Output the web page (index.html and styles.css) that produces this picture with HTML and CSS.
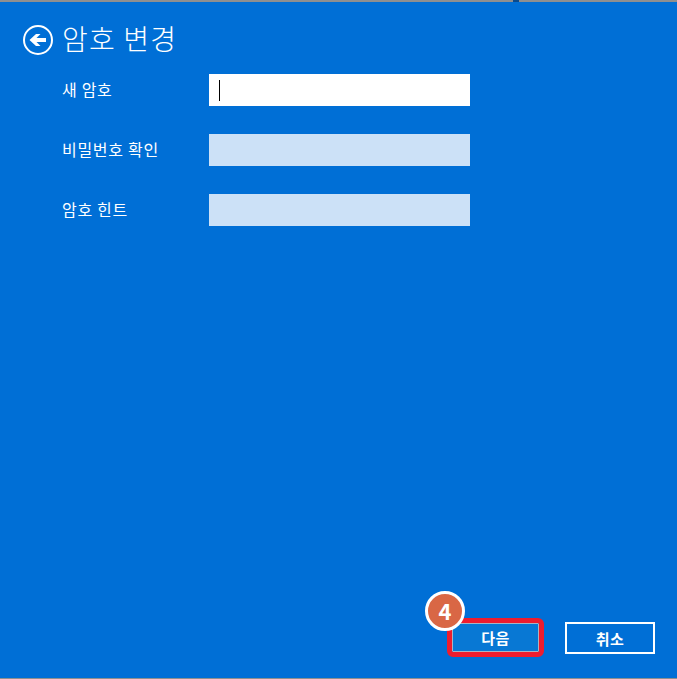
FILE: index.html
```html
<!DOCTYPE html>
<html>
  <head>
    <title>암호 변경</title>
    <link rel="stylesheet" href="styles.css">
  </head>
  <body>
    <div class="top-bar">
      <span class="top-mark"></span>
    </div>

    <div class="dialog">
      <div class="header">
        <svg class="back-icon" width="32" height="32" viewBox="0 0 32 32">
          <circle cx="16" cy="16" r="14" fill="none" stroke="#fff" stroke-width="2"/>
          <path d="M24 14H14.5L18.5 10H14L7.5 16L14 22H18.5L14.5 18H24Z" fill="#fff"/>
        </svg>
        <h1>암호 변경</h1>
      </div>

      <div class="form">
        <div class="row">
          <label>새 암호</label>
          <div class="field active"><span class="caret"></span></div>
        </div>
        <div class="row">
          <label>비밀번호 확인</label>
          <div class="field"></div>
        </div>
        <div class="row">
          <label>암호 힌트</label>
          <div class="field"></div>
        </div>
      </div>

      <div class="buttons">
        <div class="next-wrap">
          <span class="step-badge">4</span>
          <button class="next">다음</button>
        </div>
        <button class="cancel">취소</button>
      </div>
    </div>

    <div class="bottom-bar"></div>
  </body>
</html>
```

FILE: styles.css
```css
* {
  box-sizing: border-box;
}

html, body {
  height: 100%;
}

body {
  margin: 0;
  display: flex;
  flex-direction: column;
  background-color: #006fd6;
  color: #fff;
  font-family: "Noto Sans CJK KR", "Liberation Sans", sans-serif;
  overflow: hidden;
}

.top-bar {
  height: 2px;
  flex-shrink: 0;
  padding-left: 513px;
  background-color: #8f8f8f;
}

.top-mark {
  display: block;
  width: 6px;
  height: 2px;
  background-color: #0a4a8c;
}

.bottom-bar {
  height: 1px;
  flex-shrink: 0;
  background-color: #8f8f8f;
}

.dialog {
  flex: 1;
  display: flex;
  flex-direction: column;
  padding: 20px 22px 24px 22px;
}

.header {
  display: flex;
  align-items: center;
  height: 32px;
}

.back-icon {
  flex-shrink: 0;
  margin-top: 4px;
}

h1 {
  margin: 0 0 0 8px;
  font-size: 28px;
  font-weight: 300;
  line-height: 32px;
  letter-spacing: 1.2px;
}

.form {
  margin-top: 20px;
  padding-left: 40px;
  display: flex;
  flex-direction: column;
  gap: 28px;
}

.row {
  display: flex;
  align-items: center;
  height: 32px;
}

.row label {
  width: 147px;
  font-size: 16px;
  font-weight: 400;
  letter-spacing: 0.7px;
  padding-bottom: 3px;
}

.field {
  width: 261px;
  height: 32px;
  background-color: #cce1f7;
  display: flex;
  align-items: center;
  padding-left: 10px;
}

.field.active {
  background-color: #fff;
}

.caret {
  width: 1px;
  height: 21px;
  background-color: #000;
}

.buttons {
  margin-top: auto;
  display: flex;
  justify-content: flex-end;
  align-items: flex-start;
  gap: 26px;
}

.next-wrap {
  position: relative;
  margin-top: 1px;
}

button {
  display: block;
  height: 32px;
  color: #fff;
  font-family: inherit;
  font-size: 15px;
  font-weight: 700;
  letter-spacing: 0.5px;
  padding: 0;
}

.next {
  width: 87px;
  height: 29px;
  background-color: #0878d4;
  border: 1px solid #a8b4c4;
  outline: 5px solid #ee1c2e;
  outline-offset: 0;
  border-radius: 1px;
}

.cancel {
  width: 90px;
  background-color: transparent;
  border: 2px solid #fff;
}

.step-badge {
  position: absolute;
  left: -27px;
  top: -32px;
  width: 40px;
  height: 40px;
  border-radius: 50%;
  border: 3px solid #fff;
  background-color: #d96745;
  font-size: 22px;
  font-weight: 700;
  line-height: 33px;
  text-align: center;
  z-index: 2;
}
```
